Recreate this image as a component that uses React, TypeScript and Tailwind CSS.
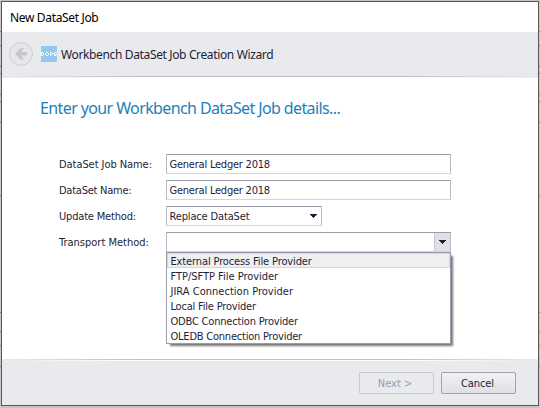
import React from "react";

const providers = [
  { name: "External Process File Provider", spacing: "tracking-[-0.13px]" },
  { name: "FTP/SFTP File Provider", spacing: "tracking-[-0.02px]" },
  { name: "JIRA Connection Provider", spacing: "tracking-[0.02px]" },
  { name: "Local File Provider", spacing: "tracking-[-0.2px]" },
  { name: "ODBC Connection Provider", spacing: "tracking-[-0.19px]" },
  { name: "OLEDB Connection Provider", spacing: "tracking-[-0.22px]" },
];

const box =
  "h-5 border border-t-[#9b9bab] border-l-[#bcbcc8] border-r-[#bcbcc8] border-b-[#d4d4da] bg-white flex items-center pl-[2.5px]";

function Arrow() {
  return (
    <svg width="7" height="4" viewBox="0 0 7 4" shapeRendering="crispEdges" fill="#1e1e36">
      <path d="M0 0h7v1h-1v1h-1v1h-1v1h-1v-1h-1v-1h-1v-1h-1z" />
    </svg>
  );
}

function Row({ label, spacing, children }: { label: string; spacing: string; children: React.ReactNode }) {
  return (
    <div className="flex h-5 items-center">
      <label className={`w-[107px] shrink-0 whitespace-nowrap ${spacing}`}>{label}</label>
      {children}
    </div>
  );
}

function Rule() {
  return (
    <div className="shrink-0">
      <div className="h-px bg-[linear-gradient(90deg,#e9eaee,#bcc0c6_25%,#bcc0c6_75%,#e9eaee)]" />
      <div className="h-px bg-[linear-gradient(90deg,#e9eaee,#ffffff_25%,#ffffff_75%,#e9eaee)]" />
    </div>
  );
}

const notches = ["mt-[31px]", "mt-[13px]", "mt-[20px]", "mt-[6px]", "mt-[20px]", "mt-[6px]", "mt-[20px]", "mt-[72px]", "mt-[116px]", "mt-[18px]", "mt-[13px]", "mt-[20px]"];

function Edge() {
  return (
    <div className="w-px shrink-0 bg-[#c8c8c8]">
      {notches.map((m, i) => (
        <div key={i} className={`${m} h-px bg-[#858585]`} />
      ))}
    </div>
  );
}

export default function App() {
  return (
    <div className="flex h-[408px] w-[540px] overflow-hidden bg-[#c4c4c4] font-['DejaVu_Sans_Condensed','DejaVu_Sans',sans-serif] text-[11px] leading-[15px] text-[#1e1e36]">
      <Edge />
      <main className="mt-px flex h-[405px] w-[538px] shrink-0 flex-col border border-[#58595b] bg-white">
        <header className="flex h-[30px] shrink-0 items-center pl-2 font-['Noto_Sans',sans-serif] text-[12px] text-black">
          <h1 className="whitespace-nowrap tracking-[-0.34px]">New DataSet Job</h1>
        </header>
        <div className="flex h-11 shrink-0 items-center bg-[#e9eaee] pl-[7px] font-['Noto_Sans',sans-serif] text-[12px]">
          <svg width="24" height="24" viewBox="0 0 24 24" fill="none">
            <circle cx="12" cy="12" r="11.4" fill="#e6e7ea" stroke="#cdced2" strokeWidth="1" />
            <path d="M6 11.8l5.6-5.6h3.6l-3.2 3.8h6v3.6h-6l3.2 3.8h-3.6z" fill="#c6c7cb" />
          </svg>
          <div className="ml-2 flex h-4 w-4 items-center justify-center overflow-hidden bg-[#92c9ec]">
            <svg width="16" height="16" viewBox="0 0 16 16" fill="none" stroke="#f2fafe" strokeWidth="1" shapeRendering="crispEdges">
              <path d="M.5 6v4M1 6.5h1M1 9.5h1M2.5 7v2M4.5 7v2M5 6.5h2M5 9.5h2M7.5 7v2M9.5 6v4M10 6.5h1M11.5 7v1M10 8.5h1M13 6.5h3M12.5 7v1M13 8.5h2M13 9.5h2M15.5 8v1" />
            </svg>
          </div>
          <h2 className="ml-1 whitespace-nowrap tracking-[-0.36px]">Workbench DataSet Job Creation Wizard</h2>
        </div>
        <Rule />
        <section className="h-[281px] shrink-0 pt-[18px]">
          <h3 className="ml-[38px] h-6 whitespace-nowrap font-['Noto_Sans',sans-serif] text-[16px] leading-6 font-normal tracking-[-0.61px] text-[#1f80b9]">
            Enter your Workbench DataSet Job details...
          </h3>
          <div className="mt-[34px] ml-[57px] flex flex-col gap-[6px]">
            <Row label="DataSet Job Name:" spacing="tracking-[-0.06px]">
              <div className={`${box} w-[285px] tracking-[-0.22px]`}><span>General Ledger 2018</span></div>
            </Row>
            <Row label="DataSet Name:" spacing="tracking-[-0.25px]">
              <div className={`${box} w-[285px] tracking-[-0.22px]`}><span>General Ledger 2018</span></div>
            </Row>
            <Row label="Update Method:" spacing="tracking-[-0.18px]">
              <div className={`${box} w-[156px] justify-between pr-1 tracking-[-0.15px]`}><span>Replace DataSet</span><Arrow /></div>
            </Row>
            <Row label="Transport Method:" spacing="tracking-[0px]">
              <div className={`${box} w-[285px] justify-end`}>
                <div className="flex h-[18px] w-4 items-center justify-center border-l border-[#c8c8d0] bg-[#e0e1e6]"><Arrow /></div>
              </div>
            </Row>
          </div>
          <ul className="ml-[164px] h-[92px] w-[285px] border border-[#9b9bab] bg-white shadow-[3px_3px_2px_-1px_#777777]">
            {providers.map((p, i) => (
              <li
                key={p.name}
                className={`flex h-[15px] items-center whitespace-nowrap pl-[3.5px] ${i === 0 ? "bg-[#eeeff1] outline -outline-offset-1 outline-[#d5d6da]" : ""}`}
              >
                <span className={`pt-[2px] ${p.spacing}`}>{p.name}</span>
              </li>
            ))}
          </ul>
        </section>
        <Rule />
        <footer className="flex grow items-start justify-end gap-[7px] bg-[#e9eaee] pt-[11px] pr-[22px]">
          <button className="h-[22px] w-[75px] rounded-[2px] border border-[#c9cad0] bg-[#e9eaee] pr-[3px] text-[#9c9ca8]" disabled>Next &gt;</button>
          <button className="h-[22px] w-[75px] rounded-[2px] border border-[#a1a2ad] bg-linear-to-b from-[#f2f2f4] to-[#dfe0e6] pr-[2px] tracking-[-0.1px]">Cancel</button>
        </footer>
      </main>
      <Edge />
    </div>
  );
}
